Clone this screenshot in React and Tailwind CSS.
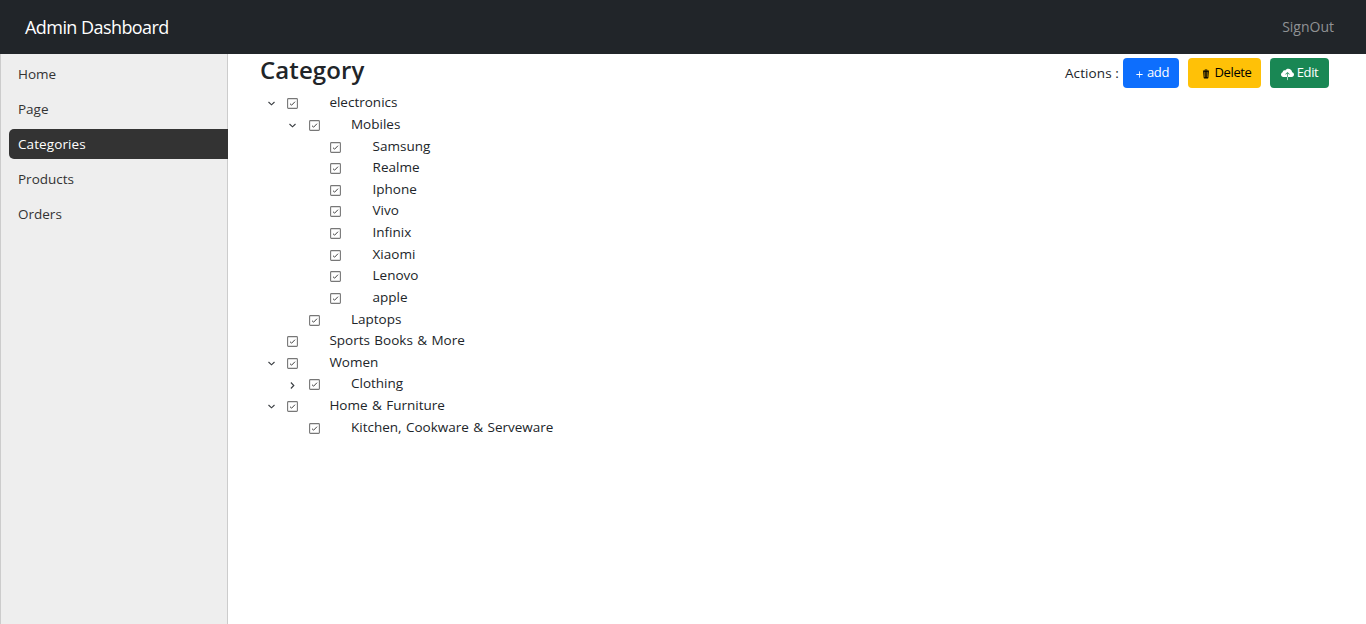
import React from 'react';
import { IoIosAdd, IoIosTrash, IoIosCloudUpload } from 'react-icons/io';

const links = ['Home', 'Page', 'Categories', 'Products', 'Orders'];

const categories = [
  {
    name: 'electronics',
    open: true,
    children: [
      {
        name: 'Mobiles',
        open: true,
        children: ['Samsung', 'Realme', 'Iphone', 'Vivo', 'Infinix', 'Xiaomi', 'Lenovo', 'apple'].map(
          (name) => ({ name })
        ),
      },
      { name: 'Laptops' },
    ],
  },
  { name: 'Sports Books & More' },
  { name: 'Women', open: true, children: [{ name: 'Clothing', open: false, children: [] }] },
  { name: 'Home & Furniture', open: true, children: [{ name: 'Kitchen, Cookware & Serveware' }] },
];

function CheckIcon() {
  return (
    <svg width="11" height="11" viewBox="0 0 11 11" fill="none">
      <rect x="0.6" y="0.6" width="9.8" height="9.8" rx="0.8" stroke="#777" strokeWidth="1.1" />
      <path d="M3 5.7 4.6 7.2 8 3.7" stroke="#444" strokeWidth="1" />
    </svg>
  );
}

function Chevron({ open }) {
  return (
    <svg width="9" height="9" viewBox="0 0 9 9" fill="none" stroke="#3a3e42" strokeWidth="1.15">
      <path d={open ? 'M1.5 3 4.5 5.8 7.5 3' : 'M2.9 1.5 5.8 4.5 2.9 7.5'} />
    </svg>
  );
}

function TreeNode({ node }) {
  return (
    <li>
      <div className="flex h-[21.64px] items-center">
        <span className="flex w-[21.6px] justify-center pt-[3px] pl-[0.6px]">
          {node.children && <Chevron open={node.open} />}
        </span>
        <span className="flex w-[21.6px] justify-center pt-[2.8px] pl-[0.6px]">
          <CheckIcon />
        </span>
        <span className="ml-[26.2px] whitespace-nowrap">{node.name}</span>
      </div>
      {node.open && <Tree nodes={node.children} nested />}
    </li>
  );
}

function Tree({ nodes, nested }) {
  return (
    <ol className={nested ? 'pl-[21.6px]' : ''}>
      {nodes.map((node) => (
        <TreeNode key={node.name} node={node} />
      ))}
    </ol>
  );
}

export default function App() {
  return (
    <div className="flex h-[624px] w-full flex-col overflow-hidden bg-white font-['Open_Sans','Noto_Sans',sans-serif] text-[13.5px] text-[#212529]">
      <header className="flex h-[54px] shrink-0 items-center justify-between bg-[#212529] pr-[32px] pl-[25px]">
        <span className="text-[18px] tracking-[-0.56px] text-white">Admin Dashboard</span>
        <span className="pb-[2px] text-[14px] text-[#909294]">SignOut</span>
      </header>
      <div className="flex min-h-0 flex-1">
        <aside className="w-[228px] shrink-0 border-x border-[#ccc] bg-[#eee] pt-[5px] pl-2">
          <ul className="-mr-px flex flex-col gap-[5px]">
            {links.map((label) => (
              <li
                key={label}
                className={
                  'flex h-[30px] items-center rounded-l-[5px] pl-[9px] ' +
                  (label === 'Categories' ? 'bg-[#333] tracking-[0.1px] text-white' : 'text-[#333]')
                }
              >
                {label}
              </li>
            ))}
          </ul>
        </aside>
        <main className="flex flex-1 items-start justify-between pr-[37px] pl-[32px]">
          <section>
            <h3 className="h-[37.6px] text-[24px] leading-[31px] font-semibold tracking-[0.1px]">Category</h3>
            <div className="[word-spacing:0.9px]">
              <Tree nodes={categories} />
            </div>
          </section>
          <div className="flex items-center pt-1">
            <span className="mr-1 tracking-[0.1px]">Actions :</span>
            <button className="flex h-[30px] w-[56px] items-center justify-center gap-px rounded-[4px] bg-[#0d6efd] text-[13px] tracking-[-0.4px] text-white">
              <IoIosAdd size={13} className="mt-[3px]" />
              <span>add</span>
            </button>
            <button className="ml-[9px] flex h-[30px] w-[73px] items-center justify-center gap-[3px] rounded-[4px] bg-[#ffc107] pl-[2px] text-[13px] tracking-[-0.4px] text-black">
              <IoIosTrash size={12} className="mt-[2px]" />
              <span>Delete</span>
            </button>
            <button className="ml-[9px] flex h-[30px] w-[59px] items-center justify-center gap-[3px] rounded-[4px] bg-[#198754] text-[13px] tracking-[-0.4px] text-white">
              <IoIosCloudUpload size={13} className="mt-[2px]" />
              <span>Edit</span>
            </button>
          </div>
        </main>
      </div>
    </div>
  );
}
